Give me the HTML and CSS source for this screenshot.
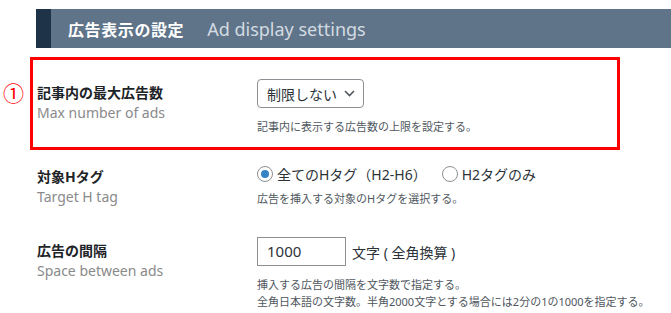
FILE: index.html
```html
<!DOCTYPE html>
<html lang="ja">

<head>
    <meta charset="UTF-8">
    <meta name="viewport" content="width=device-width, initial-scale=1.0">
    <link rel="stylesheet" href="styles.css">
    <title>広告表示の設定</title>
</head>

<body>
    <div class="page">
        <h2 class="section_head">
            <span class="head_ja">広告表示の設定</span>
            <span class="head_en">Ad display settings</span>
        </h2>

        <div class="row marked">
            <span class="mark">①</span>
            <div class="label">
                <div class="label_ja">記事内の最大広告数</div>
                <div class="label_en">Max number of ads</div>
            </div>
            <div class="field">
                <div class="select">
                    <span>制限しない</span>
                    <svg width="11" height="7" viewBox="0 0 11 7">
                        <path d="M1 1l4.5 4.5L10 1" fill="none" stroke="#50575e" stroke-width="1.6" />
                    </svg>
                </div>
                <p class="help">記事内に表示する広告数の上限を設定する。</p>
            </div>
        </div>

        <div class="row">
            <div class="label">
                <div class="label_ja">対象Hタグ</div>
                <div class="label_en">Target H tag</div>
            </div>
            <div class="field">
                <div class="radios">
                    <label class="radio"><span class="dot checked"></span>全てのHタグ（H2-H6）</label>
                    <label class="radio"><span class="dot"></span>H2タグのみ</label>
                </div>
                <p class="help">広告を挿入する対象のHタグを選択する。</p>
            </div>
        </div>

        <div class="row">
            <div class="label">
                <div class="label_ja">広告の間隔</div>
                <div class="label_en">Space between ads</div>
            </div>
            <div class="field">
                <div class="inline">
                    <div class="text_input">1000</div>
                    <span class="unit">文字 ( 全角換算 )</span>
                </div>
                <p class="help">挿入する広告の間隔を文字数で指定する。<br>全角日本語の文字数。半角2000文字とする場合には2分の1の1000を指定する。</p>
            </div>
        </div>
    </div>
</body>

</html>
```

FILE: styles.css
```css
html,
body {
    margin: 0;
    background-color: #fff;
    font-family: "Noto Sans", "Noto Sans CJK JP", sans-serif;
    color: #1d2327;
    overflow: hidden;
}

.page {
    padding-top: 9px;
}

.section_head {
    margin: 0 0 9px 36px;
    height: 39px;
    display: flex;
    align-items: center;
    background-color: #5f7488;
    border-left: 15px solid #1e3347;
    padding-left: 17px;
    font-weight: normal;
}

.head_ja {
    color: #fff;
    font-size: 16px;
    font-weight: bold;
    letter-spacing: 0.6px;
}

.head_en {
    color: #d3dbe2;
    font-size: 18px;
    margin-left: 23px;
}

.row {
    position: relative;
    width: 580px;
    margin-left: 30px;
    border: 3px solid transparent;
    padding: 10px 0 0 4px;
    display: grid;
    grid-template-columns: 220px 1fr;
}

.row.marked {
    border-color: #f00;
    padding: 19px 0 12px 4px;
}

.row + .row + .row {
    padding-top: 24px;
}

/* annotation number beside the red box */
.mark {
    position: absolute;
    left: -30px;
    top: 19px;
    color: #f00;
    font-size: 21px;
    line-height: 28px;
}

.label {
    padding-top: 4px;
}

.label_ja {
    font-size: 14px;
    font-weight: bold;
    line-height: 20px;
}

.label_en {
    font-size: 14px;
    color: #8a8a8a;
    line-height: 19px;
}

.select {
    display: inline-flex;
    align-items: center;
    gap: 7px;
    height: 27px;
    padding: 0 8px 0 9px;
    border: 1px solid #8c8f94;
    border-radius: 4px;
    font-size: 14px;
    color: #2c3338;
}

.help {
    margin: 10px 0 0;
    font-size: 11px;
    line-height: 17px;
    color: #50575e;
    white-space: nowrap;
}

.radios {
    display: flex;
    gap: 15px;
    height: 22px;
    align-items: center;
}

.radios + .help {
    margin-top: 5px;
}

.radio {
    display: flex;
    align-items: center;
    font-size: 14px;
    color: #2c3338;
}

.dot {
    width: 14px;
    height: 14px;
    border: 1px solid #8c8f94;
    border-radius: 50%;
    margin-right: 4px;
    display: flex;
    align-items: center;
    justify-content: center;
}

.dot.checked::after {
    content: "";
    width: 8px;
    height: 8px;
    border-radius: 50%;
    background-color: #3582c4;
}

.inline {
    display: flex;
    align-items: center;
    gap: 6px;
}

.text_input {
    width: 78px;
    height: 27px;
    line-height: 27px;
    padding-left: 9px;
    border: 1px solid #8c8f94;
    font-size: 15px;
    color: #2c3338;
}

.unit {
    font-size: 14px;
    color: #2c3338;
}
```
